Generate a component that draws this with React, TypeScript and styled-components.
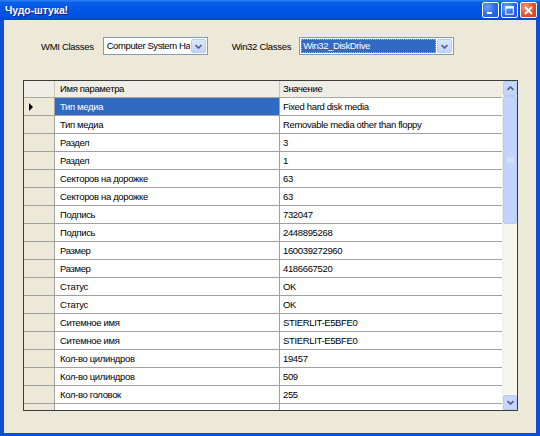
import React from "react";
import styled, { createGlobalStyle } from "styled-components";

const Global = createGlobalStyle`
  html, body { margin: 0; padding: 0; width: 540px; height: 436px; overflow: hidden; background: #ECE9D8; }
  * { box-sizing: border-box; }
`;

const Window = styled.div`
  width: 540px;
  height: 436px;
  display: flex;
  flex-direction: column;
  background: #0A4FD6;
  font-family: "Liberation Sans", Arial, sans-serif;
`;

const TitleBar = styled.div`
  height: 20px;
  flex: none;
  display: flex;
  align-items: center;
  padding: 0 3px 0 5px;
  background: linear-gradient(#2E86FA 0%, #0A5EE8 12%, #0056E6 45%, #0052DF 80%, #0348C9 100%);
`;

const Title = styled.div`
  flex: 1;
  color: #fff;
  font-family: "Liberation Sans", Arial, sans-serif;
  font-weight: bold;
  font-size: 10.5px;
  letter-spacing: -0.1px;
  text-shadow: 1px 1px 0 #0A1E8C;
`;

const Buttons = styled.div`
  display: flex;
  gap: 2px;
`;

const CapButton = styled.div<{ $close?: boolean }>`
  width: 17px;
  height: 16px;
  border: 1px solid #fff;
  border-radius: 2px;
  display: flex;
  align-items: center;
  justify-content: center;
  background: ${(p) =>
    p.$close
      ? "radial-gradient(circle at 30% 30%, #F0957A, #E0502C 60%, #C8401E)"
      : "radial-gradient(circle at 30% 30%, #6FA0FF, #2863E9 60%, #1F55D8)"};
`;

const Client = styled.div`
  flex: 1;
  margin: 0 4px 3px 4px;
  background: #ECE9D8;
  display: flex;
  flex-direction: column;
  padding: 17px 0 0 19px;
`;

const Toolbar = styled.div`
  display: flex;
  align-items: center;
  height: 18px;
  padding-left: 18px;
`;

const Label = styled.span<{ $gap: number }>`
  font-size: 9.5px;
  letter-spacing: -0.3px;
  color: #000;
  margin-right: ${(p) => p.$gap}px;
`;

const Combo = styled.div<{ $w: number; $mr?: number }>`
  width: ${(p) => p.$w}px;
  height: 18px;
  margin-right: ${(p) => p.$mr ?? 0}px;
  border: 1px solid #7F9DB9;
  background: #fff;
  display: flex;
  align-items: stretch;
  padding: 1px;
`;

const ComboText = styled.div<{ $sel?: boolean }>`
  flex: 1;
  overflow: hidden;
  white-space: nowrap;
  font-size: 9.5px;
  letter-spacing: -0.4px;
  line-height: 14px;
  padding-left: 2px;
  color: ${(p) => (p.$sel ? "#fff" : "#000")};
  background: ${(p) => (p.$sel ? "#316AC5" : "#fff")};
  outline: ${(p) => (p.$sel ? "1px dotted #9BB4E0" : "none")};
  outline-offset: -1px;
  margin-right: 1px;
`;

const DropBtn = styled.div`
  width: 15px;
  flex: none;
  border: 1px solid #B7CBF6;
  border-radius: 2px;
  background: linear-gradient(#DDE8FE, #C2D3FC);
  display: flex;
  align-items: center;
  justify-content: center;
`;

const GridFrame = styled.div`
  margin-top: 25px;
  width: 495px;
  height: 331px;
  border: 1px solid #3C3C3C;
  display: flex;
  background: #fff;
  overflow: hidden;
`;

const GridBody = styled.div`
  flex: 1;
  display: flex;
  flex-direction: column;
  overflow: hidden;
`;

const Cols = "31px 225px 1fr";

const HeaderRow = styled.div`
  display: grid;
  grid-template-columns: ${Cols};
  height: 17px;
  flex: none;
  background: #EEEDE6;
  border-bottom: 1px solid #A8A8A0;
`;

const HeadCell = styled.div<{ $last?: boolean }>`
  font-size: 9.5px;
  letter-spacing: -0.35px;
  line-height: 16px;
  padding-left: ${(p) => (p.$last ? 3 : 5)}px;
  border-right: ${(p) => (p.$last ? "none" : "1px solid #C9C7BA")};
  color: #000;
  white-space: nowrap;
`;

const Row = styled.div`
  display: grid;
  grid-template-columns: ${Cols};
  height: 18px;
  flex: none;
  border-bottom: 1px solid #A0A0A0;
`;

const RowHead = styled.div`
  background: #ECE9D8;
  border-right: 1px solid #A0A0A0;
  display: flex;
  align-items: center;
  padding-left: 5px;
`;

const Cell = styled.div<{ $sel?: boolean; $pad: number; $divider?: boolean }>`
  font-size: 9.5px;
  letter-spacing: -0.35px;
  line-height: 17px;
  padding-left: ${(p) => p.$pad}px;
  white-space: nowrap;
  overflow: hidden;
  color: ${(p) => (p.$sel ? "#fff" : "#000")};
  background: ${(p) => (p.$sel ? "#316AC5" : "#fff")};
  border-right: ${(p) => (p.$divider ? "1px solid #A0A0A0" : "none")};
`;

const ScrollBar = styled.div`
  width: 15px;
  flex: none;
  display: flex;
  flex-direction: column;
  background: #F6F5F0;
  border-left: 1px solid #EEEDE5;
`;

const ScrollBtn = styled.div`
  height: 15px;
  flex: none;
  background: #C6D6FB;
  border: 1px solid #B5C8F6;
  border-radius: 2px;
  display: flex;
  align-items: center;
  justify-content: center;
`;

const Thumb = styled.div`
  height: 128px;
  flex: none;
  background: #C3D4FC;
  border: 1px solid #B8CAF5;
  border-radius: 2px;
  display: flex;
  align-items: center;
  justify-content: center;
`;

const Track = styled.div`
  flex: 1;
`;

const Chevron = ({ down = true, color = "#4D6185" }: { down?: boolean; color?: string }) => (
  <svg width="7" height="5" viewBox="0 0 7 5">
    <path
      d={down ? "M0.5 1 L3.5 4 L6.5 1" : "M0.5 4 L3.5 1 L6.5 4"}
      fill="none"
      stroke={color}
      strokeWidth="1.6"
    />
  </svg>
);

const rows: [string, string][] = [
  ["Тип медиа", "Fixed hard disk media"],
  ["Тип медиа", "Removable media other than floppy"],
  ["Раздел", "3"],
  ["Раздел", "1"],
  ["Секторов на дорожке", "63"],
  ["Секторов на дорожке", "63"],
  ["Подпись", "732047"],
  ["Подпись", "2448895268"],
  ["Размер", "160039272960"],
  ["Размер", "4186667520"],
  ["Статус", "OK"],
  ["Статус", "OK"],
  ["Ситемное имя", "STIERLIT-E5BFE0"],
  ["Ситемное имя", "STIERLIT-E5BFE0"],
  ["Кол-во цилиндров", "19457"],
  ["Кол-во цилиндров", "509"],
  ["Кол-во головок", "255"],
  ["Кол-во головок", "255"],
];

export default function App() {
  return (
    <>
      <Global />
      <Window>
        <TitleBar>
          <Title>Чудо-штука!</Title>
          <Buttons>
            <CapButton>
              <svg width="9" height="9" viewBox="0 0 9 9">
                <rect x="1" y="6" width="5" height="2" fill="#fff" />
              </svg>
            </CapButton>
            <CapButton>
              <svg width="9" height="9" viewBox="0 0 9 9">
                <rect x="0.75" y="0.75" width="7.5" height="7.5" fill="none" stroke="#fff" strokeWidth="1" />
                <rect x="0.5" y="0.5" width="8" height="2" fill="#fff" />
              </svg>
            </CapButton>
            <CapButton $close>
              <svg width="9" height="9" viewBox="0 0 9 9">
                <path d="M1 1 L8 8 M8 1 L1 8" stroke="#fff" strokeWidth="1.8" />
              </svg>
            </CapButton>
          </Buttons>
        </TitleBar>
        <Client>
          <Toolbar>
            <Label $gap={9}>WMI Classes</Label>
            <Combo $w={105} $mr={24}>
              <ComboText>Computer System Hardware</ComboText>
              <DropBtn>
                <Chevron />
              </DropBtn>
            </Combo>
            <Label $gap={8}>Win32 Classes</Label>
            <Combo $w={155}>
              <ComboText $sel>Win32_DiskDrive</ComboText>
              <DropBtn>
                <Chevron />
              </DropBtn>
            </Combo>
          </Toolbar>
          <GridFrame>
            <GridBody>
              <HeaderRow>
                <HeadCell />
                <HeadCell>Имя параметра</HeadCell>
                <HeadCell $last>Значение</HeadCell>
              </HeaderRow>
              {rows.map(([name, value], i) => (
                <Row key={i}>
                  <RowHead>
                    {i === 0 && (
                      <svg width="4" height="8" viewBox="0 0 4 8">
                        <path d="M0 0 L4 4 L0 8 Z" fill="#000" />
                      </svg>
                    )}
                  </RowHead>
                  <Cell $sel={i === 0} $pad={5} $divider>
                    {name}
                  </Cell>
                  <Cell $pad={3}>{value}</Cell>
                </Row>
              ))}
            </GridBody>
            <ScrollBar>
              <ScrollBtn>
                <Chevron down={false} />
              </ScrollBtn>
              <Thumb>
                <svg width="7" height="7" viewBox="0 0 7 7">
                  <path d="M0 1 H7 M0 3 H7 M0 5 H7" stroke="#E4EBFD" strokeWidth="1" />
                </svg>
              </Thumb>
              <Track />
              <ScrollBtn>
                <Chevron />
              </ScrollBtn>
            </ScrollBar>
          </GridFrame>
        </Client>
      </Window>
    </>
  );
}
